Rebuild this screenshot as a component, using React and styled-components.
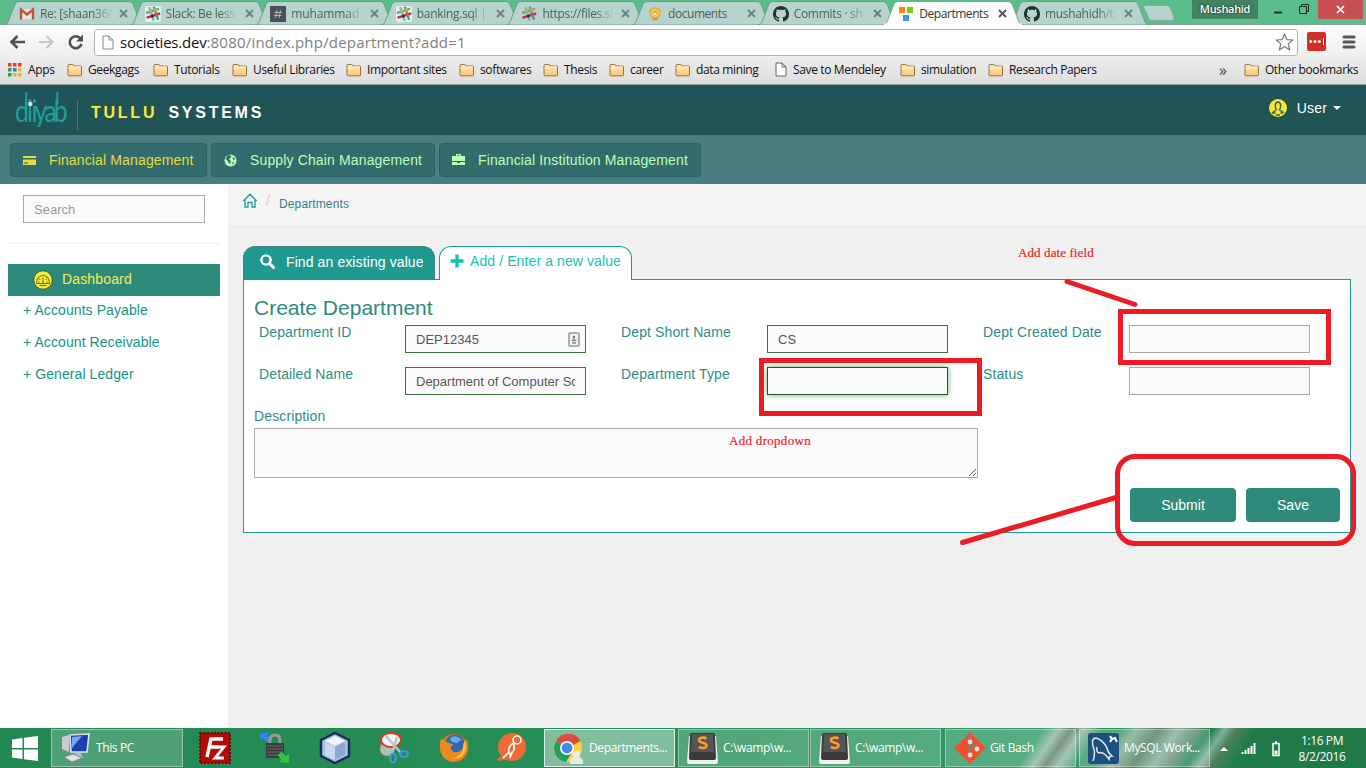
import React from "react";
import styled, { createGlobalStyle, css } from "styled-components";

const ui = `"Open Sans", "Noto Sans", sans-serif`;
const sans = `"Liberation Sans", Arial, sans-serif`;

const Global = createGlobalStyle`
  * { box-sizing: border-box; }
  body { margin: 0; overflow: hidden; font-family: ${sans}; }
`;

const Screen = styled.div`
  position: relative;
  width: 1366px;
  height: 768px;
  overflow: hidden;
  display: flex;
  flex-direction: column;
`;

/* ---------- browser window ---------- */
const TabStrip = styled.div`
  display: flex;
  flex: none;
  height: 25px;
  padding-left: 4px;
  background: #5bbd8b;
  border-bottom: 1px solid #84a396;
`;
const TabBox = styled.div`
  position: relative;
  flex: none;
  width: 140px;
  height: 25px;
  margin-right: -14.4px;
  z-index: ${(p) => (p.$active ? 3 : 1)};
  display: flex;
  align-items: center;
  padding: 2px 12px 0 15px;
`;
const TabShape = styled.svg`
  position: absolute;
  left: 0;
  top: 0;
`;
const TabIcon = styled.span`
  position: relative;
  display: flex;
  width: 16px;
  height: 16px;
  margin-right: 5px;
`;
const TabTitle = styled.span`
  position: relative;
  width: 74px;
  overflow: hidden;
  white-space: nowrap;
  font: 12px/18px ${ui};
  letter-spacing: ${(p) => p.$ls || -0.3}px;
  color: ${(p) => (p.$active ? "#333" : "#4c625a")};
  ${(p) => p.$fade && css`mask-image: linear-gradient(90deg, #000 72%, transparent 98%);`}
`;
const CloseMark = styled.svg`
  position: relative;
  margin-left: auto;
  margin-right: 4px;
`;
const NewTab = styled.svg`
  flex: none;
  margin: 5px 0 0 9px;
`;
const WindowButtons = styled.div`
  display: flex;
  margin-left: auto;
  padding-right: 3px;
`;
const Profile = styled.div`
  width: 66px;
  height: 19px;
  background: #41845f;
  color: #fff;
  text-align: center;
  font: 600 11px/18px ${ui};
  letter-spacing: -0.3px;
  text-shadow: 0 0 2px #000;
`;
const WinIcons = styled.svg`
  display: block;
`;
const WinClose = styled.div`
  width: 45px;
  height: 19px;
  background: #c75050;
  display: flex;
  align-items: center;
  justify-content: center;
`;
const Toolbar = styled.div`
  flex: none;
  height: 32px;
  display: flex;
  align-items: center;
  padding: 1px 10px 0 9px;
  background: linear-gradient(#fdfdfd, #eeeeee);
`;
const NavIcons = styled.svg`
  flex: none;
`;
const Address = styled.div`
  width: 1205px;
  height: 27px;
  margin-left: 9px;
  margin-top: 2px;
  padding: 0 3px 0 7px;
  display: flex;
  align-items: center;
  background: #fff;
  border: 1px solid #b4b4b4;
  border-radius: 3px;
`;
const Url = styled.span`
  flex: 1;
  margin: -2px 0 0 6px;
  color: #808080;
  font: 15px/20px ${ui};
  letter-spacing: 0.2px;
  b { font-weight: 400; color: #111; letter-spacing: -0.22px; }
`;
const Extension = styled.svg`
  flex: none;
  margin-left: 9px;
`;
const MenuIcon = styled.svg`
  flex: none;
  margin-left: 16px;
`;
const Bookmarks = styled.div`
  flex: none;
  height: 28px;
  display: flex;
  align-items: center;
  padding: 0 8px 2px 8px;
  background: linear-gradient(#ececec, #dedede);
  border-bottom: 1px solid #9f9f9f;
`;
const Bookmark = styled.div`
  flex: none;
  display: flex;
  align-items: center;
  gap: ${(p) => p.$gap || 5}px;
  width: ${(p) => p.$w}px;
  white-space: nowrap;
  font: 12px/18px ${ui};
  letter-spacing: -0.36px;
  color: #111;
`;
const Overflow = styled(Bookmark)`
  margin-left: auto;
  color: #444;
  font-size: 16px;
`;

const Close = ({ c = "#6b8078" }) => (
  <CloseMark width="9" height="9" viewBox="0 0 9 9">
    <path d="M1 1l7 7M8 1l-7 7" stroke={c} strokeWidth="1.8" />
  </CloseMark>
);
const Folder = () => (
  <svg width="16" height="14" viewBox="0 0 16 14">
    <defs>
      <linearGradient id="fold" x1="0" y1="0" x2="0" y2="1">
        <stop offset="0" stopColor="#ffe9b8" />
        <stop offset="1" stopColor="#f9c878" />
      </linearGradient>
    </defs>
    <path d="M1 12V2.5q0-1 1-1h3.6q1 0 1.2 1l.2.5h6.5q1 0 1 1v8q0 .8-1 .8H2q-1 0-1-.8z" fill="url(#fold)" stroke="#96703f" />
    <path d="M1.5 5.2h5L8 4h6" fill="none" stroke="#fff6df" />
  </svg>
);
const Doc = ({ c = "#666", w = 12 }) => (
  <svg width={w} height="15" viewBox="0 0 12 15">
    <path d="M1 1h6l4 4v9H1z M7 1v4h4" fill="#fff" stroke={c} />
  </svg>
);
const Gmail = () => (
  <svg width="16" height="16" viewBox="0 0 16 16">
    <path d="M1 3h14v10H1z" fill="#e7e4dd" />
    <path d="M2 13.5V3.5l6 5 6-5v10" fill="none" stroke="#c2543f" strokeWidth="2.4" />
  </svg>
);
const Slack = ({ bare }) => (
  <svg width="16" height="16" viewBox="0 0 16 16">
    {!bare && <rect width="16" height="16" rx="2" fill="#e6efe9" />}
    <g strokeWidth="2.5" strokeLinecap="round">
      <path d="M4.6 2.2l3.8 11.6" stroke="#5bc1d0" />
      <path d="M9 1.6l3.8 11.2" stroke="#3aa882" />
      <path d="M2 6.7l11-3.6" stroke="#62b08f" />
      <path d="M2.6 11.4L14.2 7.700" stroke="#d41f56" />
      <path d="M5.300 4.400l.3 1M10 3.400l.3 1" stroke="#e3a92c" />
      <path d="M7.200 10l.2.4" stroke="#40203c" />
      <path d="M11.500 8.600l.2.6" stroke="#d66a28" />
    </g>
  </svg>
);
const Hash = () => (
  <svg width="16" height="16" viewBox="0 0 16 16">
    <rect width="16" height="16" fill="#4d5058" />
    <path d="M7 4L5.5 12M10.5 4L9 12M4.5 6.5h7.4M4 9.5h7.4" stroke="#b9bcc2" strokeWidth=".9" />
  </svg>
);
const Bulb = () => (
  <svg width="16" height="16" viewBox="0 0 16 16">
    <path d="M8 1.2c4 0 6 2.3 6 5 0 3-2.2 4-2.6 6.4L10 14.6H6.4L5 12.6C4.500 10 2 9.200 2 6.200c0-2.700 2-5 6-5z" fill="#e2b33d" />
    <circle cx="8" cy="7" r="3.300" fill="none" stroke="#f3d98f" />
    <circle cx="8" cy="8" r="1.300" fill="#fff3cf" />
    <path d="M5.500 13h5" stroke="#a5803a" />
  </svg>
);
const Octocat = () => (
  <svg width="16" height="16" viewBox="0 0 16 16">
    <path
      fill="#20332d"
      d="M8 0C3.58 0 0 3.58 0 8c0 3.54 2.29 6.53 5.47 7.59.4.07.55-.17.55-.38 0-.19-.01-.82-.01-1.49-2.01.37-2.53-.49-2.69-.94-.09-.23-.48-.94-.82-1.13-.28-.15-.68-.52-.01-.53.63-.01 1.08.58 1.23.82.72 1.21 1.87.87 2.33.66.07-.52.28-.87.51-1.07-1.78-.2-3.64-.89-3.64-3.95 0-.87.31-1.59.82-2.15-.08-.2-.36-1.02.08-2.12 0 0 .67-.21 2.2.82.64-.18 1.32-.27 2-.27s1.36.09 2 .27c1.53-1.04 2.2-.82 2.2-.82.44 1.1.16 1.92.08 2.12.51.56.82 1.27.82 2.15 0 3.07-1.87 3.75-3.65 3.95.29.25.54.73.54 1.48 0 1.07-.01 1.93-.01 2.2 0 .21.15.46.55.38A8.01 8.01 0 0 0 16 8c0-4.42-3.58-8-8-8z"
    />
  </svg>
);
const Squares = () => (
  <svg width="16" height="16" viewBox="0 0 16 16">
    <path d="M1 1h6v6H1z" fill="#ff8a00" />
    <path d="M9 1h6v6H9z" fill="#76cc0e" />
    <path d="M5 9h6v6H5z" fill="#4495ee" />
  </svg>
);

const tabs = [
  { t: "Re: [shaan360", i: <Gmail />, fade: 1 },
  { t: "Slack: Be less", i: <Slack />, fade: 1 },
  { t: "muhammad |", i: <Hash />, fade: 1, ls: -0.1 },
  { t: "banking.sql | ", i: <Slack />, fade: 1 },
  { t: "https://files.sl", i: <Slack bare />, fade: 1 },
  { t: "documents", i: <Bulb />, ls: -0.45 },
  { t: "Commits · sh", i: <Octocat />, fade: 1 },
  { t: "Departments", i: <Squares />, active: true, ls: -0.45 },
  { t: "mushahidh/tu", i: <Octocat />, fade: 1 },
];

const Tab = ({ t, i, fade, active, ls }) => (
  <TabBox $active={active}>
    <TabShape width="140" height="25" viewBox="0 0 140 25">
      <path
        d="M0 25q3-.5 4-3L11 4q1-2.500 4-2.500h110q3 0 4 2.500l7 18q1 2.500 4 3z"
        fill={active ? "#fcfcfc" : "#b7d3cd"}
        stroke={active ? "#7fa796" : "#6f9a88"}
      />
      {active && <path d="M1 24.500h138" stroke="#fcfcfc" strokeWidth="2" />}
    </TabShape>
    <TabIcon>{i}</TabIcon>
    <TabTitle $fade={fade} $active={active} $ls={ls}>{t}</TabTitle>
    <Close c={active ? "#555" : undefined} />
  </TabBox>
);

const marks = [
  ["Geekgags", 86], ["Tutorials", 79], ["Useful Libraries", 114], ["Important sites", 113],
  ["softwares", 84], ["Thesis", 66], ["career", 66], ["data mining", 100],
  ["Save to Mendeley", 125, 1], ["simulation", 88], ["Research Papers", 120],
];

const Browser = () => (
  <>
    <TabStrip>
      {tabs.map((t, k) => <Tab key={k} {...t} />)}
      <NewTab width="32" height="16" viewBox="0 0 32 16">
        <path d="M2 .5h22q2 0 3 2l4 10q1 3-2 3H9q-2 0-3-2L1 3Q0 .5 2 .5z" fill="#b7d3cd" stroke="#84ad9c" />
      </NewTab>
      <WindowButtons>
        <Profile>Mushahid</Profile>
        <WinIcons width="60" height="19" viewBox="0 0 60 19">
          <path d="M16 12.500h8" stroke="#1c2b24" strokeWidth="2" />
          <path d="M41.500 6.500h7v7h-7zM43.500 6V4.500h7v7H49" fill="none" stroke="#1c2b24" />
        </WinIcons>
        <WinClose>
          <svg width="9" height="9" viewBox="0 0 9 9"><path d="M1 1l7 7M8 1l-7 7" stroke="#fff" strokeWidth="1.700" /></svg>
        </WinClose>
      </WindowButtons>
    </TabStrip>
    <Toolbar>
      <NavIcons width="76" height="20" viewBox="0 0 76 20">
        <g fill="none" strokeWidth="2.600">
          <path d="M16 10H3M8.500 4L2.500 10l6 6" stroke="#505050" />
          <path d="M30 10h13M37.500 4l6 6-6 6" stroke="#c6c6c6" strokeWidth="2.200" />
          <path d="M71.500 6.500A6 6 0 1 0 72.500 12" stroke="#505050" />
        </g>
        <path d="M74 2.500v7h-7z" fill="#505050" />
      </NavIcons>
      <Address>
        <Doc c="#8a8a8a" />
        <Url><b>societies.dev</b>:8080/index.php/department?add=1</Url>
        <svg width="19" height="19" viewBox="0 0 19 19">
          <path d="M9.500 1l2.300 5.600 6.100.4-4.700 3.900 1.500 6L9.500 13.600l-5.200 3.300 1.500-6L1.100 7l6.100-.4z" fill="none" stroke="#777" strokeWidth="1.200" strokeLinejoin="round" />
        </svg>
      </Address>
      <Extension width="19" height="19" viewBox="0 0 19 19">
        <rect width="19" height="19" rx="2" fill="#d32d27" />
        <circle cx="3.700" cy="9.500" r="1.500" fill="#fff" /><circle cx="8" cy="9.500" r="1.500" fill="#fff" /><circle cx="12.300" cy="9.500" r="1.500" fill="#fff" />
        <path d="M16.500 6v7" stroke="#fff" />
      </Extension>
      <MenuIcon width="14" height="14" viewBox="0 0 14 14">
        <path d="M2 2h10M2 7h10M2 12h10" stroke="#555" strokeWidth="3" strokeLinecap="round" />
      </MenuIcon>
    </Toolbar>
    <Bookmarks>
      <Bookmark $w={59} $gap={6}>
        <svg width="14" height="14" viewBox="0 0 14 14">
          {["#e33b2e", "#e33b2e", "#e33b2e", "#2da05a", "#2f7de0", "#f0b41d", "#2da05a", "#f0b41d", "#f0b41d"].map((c, k) => (
            <rect key={k} x={(k % 3) * 5} y={Math.floor(k / 3) * 5} width="3.500" height="3.500" fill={c} />
          ))}
        </svg>
        Apps
      </Bookmark>
      {marks.map(([n, w, d]) => (
        <Bookmark key={n} $w={w} $gap={d ? 6 : 5}>{d ? <Doc /> : <Folder />}{n}</Bookmark>
      ))}
      <Overflow $w={25}>»</Overflow>
      <Bookmark $w={114}><Folder />Other bookmarks</Bookmark>
    </Bookmarks>
  </>
);

/* ---------- web page ---------- */
const Header = styled.header`
  flex: none;
  height: 50px;
  display: flex;
  align-items: center;
  padding: 0 25px 0 15px;
  background: #215457;
`;
const Logo = styled.div`
  position: relative;
  width: 63px;
  height: 30px;
  margin-top: 9px;
  border-right: 1px solid #2e8a80;
`;
const LogoMark = styled.svg`
  position: absolute;
  left: 0;
  top: -9px;
`;
const Brand = styled.div`
  flex: 1;
  margin: 5px 0 0 13px;
  color: #fff;
  font: bold 16px/20px ${sans};
  letter-spacing: 2.75px;
  word-spacing: 4px;
  em { font-style: normal; color: #fbe93a; }
`;
const User = styled.div`
  display: flex;
  align-items: center;
  margin-top: -4px;
  color: #fff;
  font-size: 14px;
  letter-spacing: 0.2px;
  svg { display: block; }
  span { margin: 0 6px 0 10px; }
`;
const ModuleBar = styled.nav`
  flex: none;
  height: 49px;
  display: flex;
  gap: 4px;
  padding: 8px 10px;
  background: #4a7d7e;
`;
const Module = styled.div`
  width: ${(p) => p.$w}px;
  height: 34px;
  display: flex;
  align-items: center;
  gap: 13px;
  padding-left: 12px;
  white-space: nowrap;
  font-size: 14px;
  letter-spacing: 0.14px;
  color: ${(p) => (p.$on ? "#e6dc3e" : "#bdffb8")};
  background: #326c6d;
  border: 1px solid #27605f;
  border-radius: 4px;
`;
const Body = styled.div`
  flex: 1;
  display: flex;
  min-height: 0;
`;
const Side = styled.aside`
  width: 228px;
  padding: 11px 8px;
  background: #fff;
`;
const Input = styled.input`
  display: block;
  width: ${(p) => p.$w || 181}px;
  height: 28px;
  padding: 0 10px;
  border-radius: 0;
  outline: none;
  background: #fbfbfb;
  border: 1px solid ${(p) => (p.$focus ? "#2b542c" : p.$ok ? "#3c763d" : "#aaa")};
  ${(p) => p.$focus && css`box-shadow: 0 0 6px #67b168;`}
  color: #555;
  font: 13px ${sans};
  &::placeholder { color: #999; }
`;
const Search = styled.div`
  padding: 0 15px 20px;
  border-bottom: 1px solid #eee;
  margin-bottom: 20px;
`;
const Dashboard = styled.div`
  height: 32px;
  display: flex;
  align-items: center;
  gap: 9px;
  padding-left: 25px;
  background: #2e8b7c;
  color: #fbe94f;
  font-size: 14px;
  letter-spacing: 0.15px;
  span { margin-top: -2px; }
`;
const MenuItem = styled.div`
  height: 32px;
  padding-left: 15px;
  color: #159487;
  font-size: 14px;
  line-height: 28px;
  letter-spacing: 0.08px;
`;
const Main = styled.main`
  flex: 1;
  background: #f0f0f0;
`;
const Crumbs = styled.div`
  height: 43px;
  display: flex;
  align-items: center;
  padding: 0 0 3px 15px;
  background: #f4f4f4;
  border-bottom: 1px solid #e7e7e7;
  color: #2f8480;
  font-size: 12px;
  letter-spacing: 0.12px;
  svg { margin-top: -7px; }
  i { margin: -7px 9px 0; font-style: normal; font-size: 14px; color: #ccc; }
`;
const PageTabs = styled.div`
  position: relative;
  z-index: 1;
  display: flex;
  gap: 4px;
  margin: 19px 15px -1px;
  height: 34px;
`;
const PageTab = styled.div`
  width: ${(p) => (p.$on ? 193 : 192)}px;
  height: ${(p) => (p.$on ? 34 : 33)}px;
  display: flex;
  align-items: center;
  gap: ${(p) => (p.$on ? 6 : 11)}px;
  padding: ${(p) => (p.$on ? "0 0 6px 10px" : "0 0 3px 16px")};
  border: 1px solid ${(p) => (p.$on ? "#1f9a90" : "#40807c")};
  border-bottom: 0;
  border-radius: 12px 12px 0 0;
  background: ${(p) => (p.$on ? "#fff" : "#1f9a90")};
  color: ${(p) => (p.$on ? "#12c4b0" : "#fff")};
  font-size: 14px;
  letter-spacing: 0.1px;
  white-space: nowrap;
`;
const Panel = styled.section`
  width: 1108px;
  height: 254px;
  margin-left: 15px;
  padding: 17px 10px 0 10px;
  background: #fff;
  border: 1px solid #1f9a90;
  color: #2a8f86;
  display: flex;
  flex-direction: column;
`;
const Title = styled.h3`
  margin: 0;
  font: 21px/22px ${sans};
  color: #2d8a80;
`;
const Fields = styled.div`
  display: grid;
  grid-template-columns: repeat(3, 362px);
  row-gap: 14px;
  padding: 6px 0 0 5px;
  margin-right: -10px;
`;
const Field = styled.div`
  position: relative;
  display: flex;
`;
const Label = styled.label`
  width: ${(p) => p.$w || 146}px;
  font-size: 14px;
  line-height: 15px;
  letter-spacing: 0.12px;
`;
const Badge = styled.svg`
  position: absolute;
  left: 309px;
  top: 7px;
`;
const Description = styled.div`
  display: flex;
  flex-direction: column;
  gap: 4px;
  margin-top: 14px;
`;
const Area = styled.textarea`
  display: block;
  width: 724px;
  height: 50px;
  resize: both;
  background: #fbfbfb;
  border: 1px solid #aaa;
`;
const Actions = styled.div`
  display: flex;
  justify-content: flex-end;
  gap: 10px;
  margin-top: 10px;
`;
const Button = styled.button`
  width: ${(p) => p.$w}px;
  height: 34px;
  border: 0;
  border-radius: 4px;
  background: #2e8b7c;
  color: #fff;
  font: 14px ${sans};
`;

const Page = () => (
  <>
    <Header>
      <Logo>
        <LogoMark width="56" height="42" viewBox="0 0 56 42">
          <g transform="scale(.8 1)">
            <text x="0 15 20.500 24.500 37 48.500" y="30.500" fontFamily="Lato" fontSize="31" fill="#1fa096">diiyab</text>
          </g>
          <path d="M11.200 1v12M42.300 1v12" stroke="#1fa096" strokeWidth="2" />
          <circle cx="15.300" cy="13" r="2.300" fill="#d5dcdc" />
        </LogoMark>
      </Logo>
      <Brand><em>TULLU</em> SYSTEMS</Brand>
      <User>
        <svg width="18" height="18" viewBox="0 0 18 18">
          <circle cx="9" cy="9" r="9" fill="#f7e632" />
          <path d="M7.600 10.500C5.800 9 5.600 3 9 3s3.200 6 1.400 7.500c.2 1.500 3.600 1.400 4 3.500M7.600 10.500c-.2 1.500-3.600 1.400-4 3.500h3M11.400 14h3M7 16h4" fill="none" stroke="#31605a" strokeWidth="1.400" />
        </svg>
        <span>User</span>
        <svg width="8" height="4" viewBox="0 0 8 4"><path d="M0 0h8L4 4z" fill="#fff" /></svg>
      </User>
    </Header>
    <ModuleBar>
      <Module $w={197} $on>
        <svg width="13" height="11" viewBox="0 0 13 11"><path d="M0 1h13v2H0zM0 4.500h13V10H0z" fill="currentColor" /><path d="M1 8h4" stroke="#326c6d" strokeWidth="1.200" /></svg>
        Financial Management
      </Module>
      <Module $w={224}>
        <svg width="13" height="13" viewBox="0 0 13 13"><circle cx="6.500" cy="6.500" r="6" fill="currentColor" /><path d="M4 1l3.500 1L6 4.500 4.500 5 7 7 6 10 4.500 8.500 3 6 1.500 5zM8.500 3l2 1 .5 2-2-.5zM8.500 8l2 .5-2 2.500z" fill="#326c6d" /></svg>
        Supply Chain Management
      </Module>
      <Module $w={262}>
        <svg width="13" height="12" viewBox="0 0 13 12"><path d="M4 2V0h5v2h4v5H0V2zM5.200 1.200V2h2.600v-.8zM0 8h5v1h3V8h5v3H0z" fill="currentColor" fillRule="evenodd" /></svg>
        Financial Institution Management
      </Module>
    </ModuleBar>
    <Body>
      <Side>
        <Search><Input $w={182} placeholder="Search" /></Search>
        <Dashboard>
          <svg width="20" height="20" viewBox="0 0 20 20">
            <circle cx="10" cy="10" r="9.300" fill="#fbe93a" stroke="#246053" />
            <path d="M3.700 13.500C3.200 9 6 5.500 10 5.500s6.800 3.500 6.300 8z" fill="none" stroke="#5d7a2c" strokeWidth="1.100" />
            <path d="M10 7.500V13M6.500 9l.8.8M13.500 9l-.8.8M6.500 15.500h7M5.200 12h1.300M13.500 12h1.300" stroke="#5d7a2c" strokeWidth="1.100" />
          </svg>
          <span>Dashboard</span>
        </Dashboard>
        <MenuItem>+ Accounts Payable</MenuItem>
        <MenuItem>+ Account Receivable</MenuItem>
        <MenuItem>+ General Ledger</MenuItem>
      </Side>
      <Main>
        <Crumbs>
          <svg width="14" height="15" viewBox="0 0 14 15"><path d="M.7 7.500L7 1.200l6.300 6.300H12V14H9V9.500H5V14H2V7.500z" fill="none" stroke="#18a092" strokeWidth="1.300" /></svg>
          <i>/</i>Departments
        </Crumbs>
        <PageTabs>
          <PageTab>
            <svg width="15" height="15" viewBox="0 0 15 15"><circle cx="6" cy="6" r="4.600" fill="none" stroke="#fff" strokeWidth="2.400" /><path d="M9.500 9.500l4 4" stroke="#fff" strokeWidth="3" strokeLinecap="round" /></svg>
            Find an existing value
          </PageTab>
          <PageTab $on>
            <svg width="14" height="14" viewBox="0 0 14 14"><path d="M7 .5v13M.5 7h13" stroke="currentColor" strokeWidth="3.400" /></svg>
            Add / Enter a new value
          </PageTab>
        </PageTabs>
        <Panel>
          <Title>Create Department</Title>
          <Fields>
            <Field>
              <Label>Department ID</Label><Input $ok defaultValue="DEP12345" />
              <Badge width="12" height="15" viewBox="0 0 12 15">
                <rect x="1" y="1" width="10" height="13" rx="1" fill="#f4f4f4" stroke="#999" strokeWidth="1.600" />
                <circle cx="6" cy="5" r="1.300" fill="#777" /><path d="M3.500 8.500h5M6 5v3M4 11h4" stroke="#888" strokeWidth="1.400" />
              </Badge>
            </Field>
            <Field><Label>Dept Short Name</Label><Input $ok defaultValue="CS" /></Field>
            <Field><Label>Dept Created Date</Label><Input /></Field>
            <Field><Label>Detailed Name</Label><Input $ok defaultValue="Department of Computer Science" /></Field>
            <Field><Label>Department Type</Label><Input $focus /></Field>
            <Field><Label>Status</Label><Input /></Field>
          </Fields>
          <Description>
            <Label>Description</Label>
            <Area />
          </Description>
          <Actions>
            <Button $w={106}>Submit</Button>
            <Button $w={94}>Save</Button>
          </Actions>
        </Panel>
      </Main>
    </Body>
  </>
);

/* ---------- red pen annotations laid over the page ---------- */
const PenBox = styled.div`
  position: absolute;
  left: ${(p) => p.$x}px;
  top: ${(p) => p.$y}px;
  width: ${(p) => p.$w}px;
  height: ${(p) => p.$h}px;
  border: 5px solid #ed1c24;
  border-radius: ${(p) => p.$r || 0}px;
  pointer-events: none;
`;
const PenNote = styled.div`
  position: absolute;
  left: ${(p) => p.$x}px;
  top: ${(p) => p.$y}px;
  color: #ed1c24;
  font: 13px/16px "Liberation Serif", serif;
  letter-spacing: ${(p) => p.$ls}px;
  -webkit-text-stroke: 0.2px #ed1c24;
  white-space: nowrap;
`;
const PenLines = styled.svg`
  position: absolute;
  left: 950px;
  top: 270px;
  pointer-events: none;
`;

/* ---------- taskbar ---------- */
const Taskbar = styled.footer`
  flex: none;
  height: 40px;
  display: flex;
  align-items: center;
  padding: 1px 20px 1px 12px;
  color: #fff;
  font: 12px/16px ${ui};
  letter-spacing: -0.38px;
  background:
    linear-gradient(125deg, transparent 855px, #8db8a0 868px, #5a7d5e 878px, #90b5a5 888px, transparent 904px),
    linear-gradient(125deg, transparent 918px, #7fab92 932px, #4f7a5a 950px, #86ad9c 966px, #5f8a6c 980px, transparent 990px),
    linear-gradient(125deg, transparent 994px, #7fae98 1004px, #4c7f5a 1014px, transparent 1030px),
    linear-gradient(90deg, #238752, #27915a 60%, #2e9a65 78%, #1f7a48 92%, #1f7a48);
`;
const Start = styled.svg`
  flex: none;
  margin-right: 13px;
`;
const Task = styled.div`
  flex: none;
  width: ${(p) => p.$w || 131}px;
  height: 38px;
  margin-right: ${(p) => p.$mr || 0}px;
  display: flex;
  align-items: center;
  gap: ${(p) => p.$gap || 4}px;
  padding-left: 8px;
  white-space: nowrap;
  border: 1px solid rgba(255, 255, 255, ${(p) => (p.$on ? 0.75 : 0.4)});
  background: rgba(255, 255, 255, ${(p) => (p.$on ? 0.42 : 0.2)});
`;
const Pin = styled.svg`
  flex: none;
  margin-right: ${(p) => p.$mr || 28}px;
`;
const Tray = styled.svg`
  flex: none;
  margin-left: 8px;
`;
const Clock = styled.div`
  width: 60px;
  margin: 1px -6px 0 auto;
  text-align: center;
`;

const Sublime = () => (
  <svg width="31" height="31" viewBox="0 0 31 31">
    <path d="M2 3h27l2 26q0 2-2 2H2q-2 0-2-2z" fill="#f1f1f1" />
    <path d="M3 2q0-2 2-2h21q2 0 2 2l1 23q0 2-2 2H4q-2 0-2-2z" fill="#3a3a3a" />
    <path d="M5 1h21l1 18H4z" fill="#555" />
    <path d="M19.500 5.500c-3-1.500-7.500-1-7.500 1.800 0 3.200 7.500 1.600 7.500 5 0 3-4.500 3.500-7.800 1.500" fill="none" stroke="#ff9a2c" strokeWidth="2.600" />
  </svg>
);

const Bar = () => (
  <Taskbar>
    <Start width="26" height="25" viewBox="0 0 26 25">
      <path d="M0 3.500L10.500 2v10H0zM12 1.800L26 0v12H12zM0 13.500h10.500V23L0 21.500zM12 13.500h14V25l-14-1.800z" fill="#fff" />
    </Start>
    <Task $w={132} $mr={16}>
      <svg width="32" height="30" viewBox="0 0 32 30">
        <path d="M2 4l7-2v17l-7-3z" fill="#c9ccd2" />
        <path d="M10 2l19-1-2 18-16 0z" fill="#1b3fb0" stroke="#dde3ee" strokeWidth="1.600" />
        <path d="M12 4l10-1-10 12z" fill="#7fa4ee" />
        <path d="M15 20h6l2 5H11z" fill="#b5b9c0" />
        <path d="M4 24l9-3 9 4-10 4z" fill="#dfe2e6" stroke="#8b9097" />
      </svg>
      This PC
    </Task>
    <Pin width="32" height="32" viewBox="0 0 32 32">
      <rect x="1" y="1" width="30" height="30" fill="#b50b06" stroke="#6d0703" strokeDasharray="2 1.500" strokeWidth="2" />
      <path d="M8 25L12 7h12M10.500 15h9" fill="none" stroke="#fff" strokeWidth="3.500" />
      <path d="M15.500 15H25L16 26h9" fill="none" stroke="#fff" strokeWidth="2.800" />
    </Pin>
    <Pin width="32" height="32" viewBox="0 0 32 32">
      <path d="M1 1l9-1-2 3 4 5-4 3-4-5-3 2z" fill="#2f86e6" />
      <path d="M11 13V8q0-5 5-5t5 5v5" fill="none" stroke="#999" strokeWidth="3" />
      <rect x="7" y="11" width="18" height="15" rx="1" fill="#3b3b3b" />
      <path d="M8 14h16M8 17h16M8 20h16M8 23h16" stroke="#6a6a6a" />
      <path d="M30 31l-10-1 2.500-2.500-4-4 4-4 4.500 5 3-3z" fill="#35c33c" />
    </Pin>
    <Pin width="32" height="32" viewBox="0 0 32 32">
      <path d="M16 1l14 7v16l-14 7-14-7V8z" fill="#a9c3e2" stroke="#1b2c5d" strokeWidth="2.500" strokeLinejoin="round" />
      <path d="M16 4l10 5-10 5-10-5z" fill="#eef5fc" /><path d="M6 10l10 5v13L6 23z" fill="#c7daee" /><path d="M26 10l-10 5v13l10-5z" fill="#8caacd" />
    </Pin>
    <Pin width="32" height="32" viewBox="0 0 32 32">
      <ellipse cx="8" cy="17" rx="7" ry="7" fill="#a9c4b2" stroke="#b98a80" />
      <ellipse cx="12" cy="8" rx="10" ry="7" fill="#f4f4f4" stroke="#d33b33" strokeWidth="2" />
      <path d="M7 4l15 17M18 5l-5 17" stroke="#b9c3cc" strokeWidth="2.500" />
      <ellipse cx="14" cy="26" rx="2.800" ry="4.500" fill="none" stroke="#3c9be0" strokeWidth="2.200" /><ellipse cx="25" cy="22" rx="3.800" ry="3" fill="none" stroke="#3c9be0" strokeWidth="2.200" />
    </Pin>
    <Pin width="30" height="32" viewBox="0 0 32 32">
      <circle cx="16" cy="16" r="15" fill="#e8731a" />
      <circle cx="17" cy="12" r="10.500" fill="#2c69b6" /><path d="M12 5q6-4 12 2l-5 4-6-2z" fill="#63aede" />
      <path d="M2 6q4 2 7 4l6 2-3 4q3 6 9 4 5-2 5-9l4-4q3 15-7 21-10 5-18-2Q-1 17 2 6z" fill="#ef8a22" />
      <path d="M27 8q5 10-3 17-4 3-10 2 12-2 12-14z" fill="#fbc53a" />
    </Pin>
    <Pin width="30" height="32" viewBox="0 0 30 32" $mr={17}>
      <circle cx="15" cy="15" r="14" fill="#ef6a35" /><path d="M0 27l8-5 3 5-10 2z" fill="#ef6a35" />
      <circle cx="20" cy="8" r="4" fill="#ef6a35" stroke="#fff" strokeWidth="1.500" />
      <path d="M17 11q-8 4-4 12l4-5zM12 20l-6 6M15 21l-2 5" fill="none" stroke="#fff" strokeWidth="1.600" />
    </Pin>
    <Task $on $mr={3} $gap={5}>
      <svg width="31" height="31" viewBox="0 0 31 31">
        <circle cx="15" cy="15" r="14" fill="#fdd23c" />
        <path d="M15 15L3 8a14 14 0 0 1 24.500 0z" fill="#dd4b3e" />
        <path d="M15 15L3 8a14 14 0 0 0 10 21l5-8z" fill="#1fa05d" />
        <circle cx="14" cy="15" r="7" fill="#fff" /><circle cx="14" cy="15" r="5.400" fill="#4787ee" />
        <path d="M22 18q4-1 5 2 0 3-1 4 4 1 4 5v2H17v-2q0-4 3-5-2-5 2-6z" fill="#e9ebe5" />
      </svg>
      Departments...
    </Task>
    <Task $mr={1} $gap={5}><Sublime />C:\wamp\w...</Task>
    <Task $mr={4} $gap={5}><Sublime />C:\wamp\w...</Task>
    <Task $mr={3}>
      <svg width="32" height="32" viewBox="0 0 32 32">
        <path d="M16 0l16 16-16 16L0 16z" fill="#f0502f" />
        <path d="M12 4l4 6v13M16 11l7 6" stroke="#5f8c74" strokeWidth="2" fill="none" />
        <circle cx="16" cy="10" r="2.400" fill="#d9e6dd" /><circle cx="16" cy="23" r="2.400" fill="#d9e6dd" /><circle cx="23" cy="17" r="2.400" fill="#d9e6dd" />
      </svg>
      Git Bash
    </Task>
    <Task $gap={5}>
      <svg width="31" height="31" viewBox="0 0 31 31">
        <rect width="31" height="31" rx="3" fill="#1f4f7c" />
        <path d="M5 28Q8 20 5 13 3 5 8 5q7 2 11 10 1 5 5 8-3 0-3 3-6-8-10-6-3-1-2-6" fill="none" stroke="#e2ebf2" strokeWidth="1.500" />
        <path d="M22 3l2 3 3-1 2 4M24 6l-2 3" stroke="#fff" strokeWidth="2" fill="none" />
      </svg>
      MySQL Work...
    </Task>
    <Tray width="64" height="20" viewBox="0 0 64 20">
      <path d="M2 13l4-4 4 4z" fill="#fff" />
      <path d="M24.500 16v-2M27.500 16v-4M30.500 16v-6M33.500 16V8M36.500 16V5" stroke="#fff" strokeWidth="2" />
      <path d="M55 5.500h6v12h-6zM57 4h2" fill="none" stroke="#fff" strokeWidth="1.500" /><path d="M56.500 12.500h3v4h-3z" fill="#fff" />
    </Tray>
    <Clock>1:16 PM<br />8/2/2016</Clock>
  </Taskbar>
);

export default function App() {
  return (
    <Screen>
      <Global />
      <Browser />
      <Page />
      <PenBox $x={1118} $y={309} $w={213} $h={56} />
      <PenBox $x={759} $y={358} $w={223} $h={58} />
      <PenBox $x={1115} $y={454} $w={241} $h={92} $r={20} />
      <PenNote $x={1018} $y={245} $ls={0.1}>Add date field</PenNote>
      <PenNote $x={729} $y={433} $ls={0.3}>Add dropdown</PenNote>
      <PenLines width="200" height="280" viewBox="950 270 200 280">
        <path d="M1067 281.500L1135 304.500M962.500 542.500L1116 497.500" stroke="#ed1c24" strokeWidth="5" strokeLinecap="round" />
      </PenLines>
      <Bar />
    </Screen>
  );
}
